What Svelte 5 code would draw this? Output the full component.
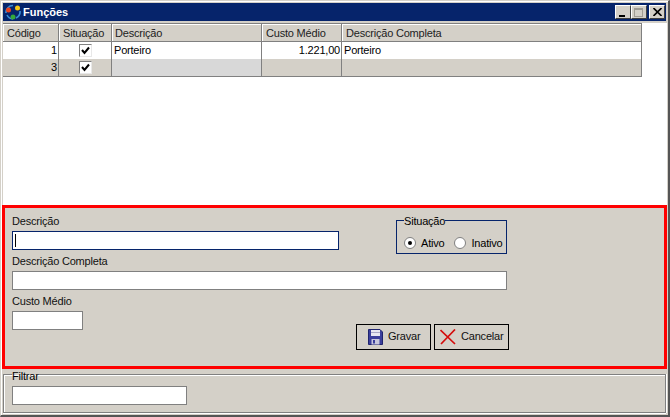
<script>
  let cols = ['Código', 'Situação', 'Descrição', 'Custo Médio', 'Descrição Completa'];
  let rows = [
    { id: 1, desc: 'Porteiro', custo: '1.221,00', full: 'Porteiro', sel: false },
    { id: 3, desc: '', custo: '', full: '', sel: true }
  ];
</script>

<div class="window">
  <!-- Title bar -->
  <header class="titlebar">
    <svg class="logo" width="16" height="16" viewBox="0 0 16 16">
      <path d="M1 9 A7 7 0 0 1 8 1.5" fill="none" stroke="#3a8fd8" stroke-width="1.6"/>
      <path d="M2 11 A7 7 0 0 0 8 15" fill="none" stroke="#3a8fd8" stroke-width="1.6"/>
      <path d="M15 7 A7 7 0 0 1 11 14" fill="none" stroke="#3a8fd8" stroke-width="1.6"/>
      <circle cx="3.5" cy="6" r="2.5" fill="#e8401c"/>
      <circle cx="12.5" cy="4" r="2.5" fill="#f6c716"/>
      <circle cx="8" cy="13" r="2.5" fill="#35a83a"/>
    </svg>
    <span class="title">Funções</span>
    <div class="winbtns">
      <button class="wb"><i class="min"></i></button>
      <button class="wb"><i class="max"></i></button>
      <button class="wb close">
        <svg width="9" height="8" viewBox="0 0 9 8"><path d="M0.5 0 L8.5 8 M8.5 0 L0.5 8" stroke="#000" stroke-width="1.6"/></svg>
      </button>
    </div>
  </header>

  <!-- Grid -->
  <section class="gridarea">
    <div class="grid">
      {#each cols as c}
        <div class="th">{c}</div>
      {/each}
      {#each rows as r}
        <div class="td num" class:sel={r.sel}>{r.id}</div>
        <div class="td check" class:sel={r.sel}>
          <span class="cb">
            <svg width="9" height="9" viewBox="0 0 9 9"><path d="M1 4 L3.5 7 L8 1.5" fill="none" stroke="#000" stroke-width="2"/></svg>
          </span>
        </div>
        <div class="td" class:selfocus={r.sel}>{r.desc}</div>
        <div class="td num" class:sel={r.sel}>{r.custo}</div>
        <div class="td" class:sel={r.sel}>{r.full}</div>
      {/each}
    </div>
  </section>

  <!-- Edit form -->
  <section class="form">
    <div class="toprow">
      <div class="field">
        <span class="lbl">Descrição</span>
        <div class="input focused w-desc"><span class="caret"></span></div>
      </div>
      <fieldset class="situacao">
        <legend>Situação</legend>
        <span class="radio on"></span><span class="rlabel">Ativo</span>
        <span class="radio"></span><span class="rlabel last">Inativo</span>
      </fieldset>
    </div>
    <div class="field">
      <span class="lbl">Descrição Completa</span>
      <div class="input w-full"></div>
    </div>
    <div class="bottomrow">
      <div class="field">
        <span class="lbl">Custo Médio</span>
        <div class="input w-custo"></div>
      </div>
      <div class="buttons">
        <button class="btn gravar">
          <svg width="15" height="16" viewBox="0 0 15 16">
            <path d="M0.5 0.5 H12 L14.5 3 V15.5 H0.5 Z" fill="#3b3f9c" stroke="#20246e"/>
            <rect x="3" y="1" width="9" height="6" fill="#e8e8f2"/>
            <rect x="3" y="3" width="9" height="1" fill="#a8a8c8"/>
            <rect x="3.5" y="10" width="8" height="5.5" fill="#c8c8dc"/>
            <rect x="5" y="11" width="2" height="3.5" fill="#3b3f9c"/>
          </svg>
          <span>Gravar</span>
        </button>
        <button class="btn cancelar">
          <svg width="16" height="16" viewBox="0 0 16 16">
            <path d="M0.5 1 L15 15 M15 0.5 L1 15" fill="none" stroke="#d40c0c" stroke-width="1.7"/>
          </svg>
          <span>Cancelar</span>
        </button>
      </div>
    </div>
  </section>

  <!-- Filter -->
  <fieldset class="filtro">
    <legend>Filtrar</legend>
    <div class="input w-filtro"></div>
  </fieldset>
</div>

<style>
  :global(body) {
    margin: 0;
    background: #d4d0c8;
  }

  * {
    box-sizing: border-box;
  }

  .window {
    width: 670px;
    height: 417px;
    display: flex;
    flex-direction: column;
    font-family: Tahoma, "Liberation Sans", sans-serif;
    font-size: 11px;
    letter-spacing: -0.2px;
    color: #000;
    background: #d4d0c8;
    border-style: solid;
    border-width: 1px 2px 2px 1px;
    border-color: #d4d0c8 #555 #555 #d4d0c8;
    box-shadow: inset 1px 1px 0 #fff;
    padding: 2px 1px 0 1px;
    overflow: hidden;
  }

  .titlebar {
    height: 18px;
    flex: none;
    display: flex;
    align-items: center;
    background: #06246b;
    padding: 0 1px 0 2px;
    margin: 0 1px 0 1px;
  }

  .logo {
    margin-right: 2px;
  }

  .title {
    color: #fff;
    font-weight: bold;
    font-size: 11px;
    letter-spacing: 0;
  }

  .winbtns {
    margin-left: auto;
    display: flex;
  }

  .wb {
    width: 16px;
    height: 14px;
    padding: 0;
    background: #d4d0c8;
    border-style: solid;
    border-width: 1px;
    border-color: #fff #404040 #404040 #fff;
  }

  .wb.close {
    margin-left: 2px;
    display: flex;
    align-items: center;
    justify-content: center;
  }

  .min {
    display: block;
    width: 6px;
    height: 2px;
    background: #000;
    margin: 8px 0 0 3px;
  }

  .max {
    display: block;
    width: 9px;
    height: 9px;
    border: 1px solid #a09c94;
    border-top-width: 2px;
    margin: 1px 0 0 2px;
  }

  .gridarea {
    background: #fff;
    height: 182px;
    flex: none;
    margin: 2px 0 0 1px;
  }

  .grid {
    display: grid;
    grid-template-columns: 56px 53px 150px 80px 300px;
    grid-template-rows: 19px 17px 17px;
    width: 639px;
    border-bottom: 1px solid #808080;
    box-shadow: inset 1px 0 0 #808080;
  }

  .th {
    background: #d4d0c8;
    border-right: 1px solid #808080;
    border-bottom: 1px solid #808080;
    border-top: 1px solid #808080;
    box-shadow: inset 1px 1px 0 #fff;
    padding: 3px 0 0 4px;
    white-space: nowrap;
    color: #222;
  }

  .th:nth-child(3) {
    padding-left: 3px;
  }

  .td {
    border-right: 1px solid #808080;
    padding: 2px 1px 0 2px;
    white-space: nowrap;
    background: #fff;
  }

  .num {
    text-align: right;
  }

  .sel {
    background: #d4d0c8;
  }

  .selfocus {
    background: #d8d8d8;
  }

  .check {
    display: flex;
    justify-content: center;
    align-items: center;
    padding: 0;
  }

  .cb {
    width: 13px;
    height: 13px;
    background: #fff;
    border: 1px solid;
    border-color: #808080 #e8e8e8 #e8e8e8 #808080;
    display: flex;
    align-items: center;
    justify-content: center;
  }

  .form {
    height: 164px;
    flex: none;
    border: 3px solid #f00;
    padding: 5px 0 0 7px;
  }

  .toprow {
    display: flex;
    align-items: flex-start;
    height: 40px;
  }

  .field {
    display: flex;
    flex-direction: column;
  }

  .lbl {
    height: 18px;
    line-height: 16px;
    color: #111;
  }

  .input {
    height: 19px;
    background: #fff;
    border: 1px solid #808080;
    display: flex;
    align-items: center;
  }

  .w-desc {
    width: 327px;
  }

  .w-full {
    width: 495px;
  }

  .w-custo {
    width: 71px;
  }

  .w-filtro {
    width: 175px;
  }

  .input.focused {
    border-color: #06246b;
    padding-left: 2px;
  }

  .caret {
    width: 1px;
    height: 13px;
    background: #000;
  }

  .situacao {
    margin: 2px 0 0 57px;
    padding: 6px 0 0 7px;
    width: 111px;
    min-width: 0;
    height: 39px;
    border: 1px solid #06246b;
    display: flex;
    align-items: center;
  }

  .situacao legend,
  .filtro legend {
    padding: 0;
    height: 11px;
    font-size: 11px;
  }

  .situacao legend {
    line-height: 12px;
  }

  .filtro legend {
    line-height: 14px;
  }

  .radio {
    width: 12px;
    height: 12px;
    flex: none;
    border-radius: 50%;
    background: #fff;
    border: 1px solid #808080;
    position: relative;
  }

  .radio.on::after {
    content: '';
    position: absolute;
    left: 3px;
    top: 3px;
    width: 4px;
    height: 4px;
    border-radius: 50%;
    background: #000;
  }

  .rlabel {
    margin: 0 10px 0 5px;
  }

  .rlabel.last {
    margin-right: 0;
  }

  .bottomrow {
    margin-top: 3px;
    display: flex;
    align-items: flex-start;
  }

  .buttons {
    display: flex;
    gap: 3px;
    margin: 31px 0 0 273px;
  }

  .btn {
    height: 26px;
    background: #d4d0c8;
    border: 1px solid #000;
    font: inherit;
    letter-spacing: inherit;
    display: flex;
    align-items: center;
    padding: 0;
    color: #111;
  }

  .btn span {
    margin-bottom: 2px;
  }

  .gravar {
    width: 75px;
    padding-left: 11px;
    gap: 5px;
  }

  .cancelar {
    width: 75px;
    padding-left: 5px;
    gap: 5px;
  }

  .filtro {
    margin: 0 0 0 1px;
    padding: 6px 0 0 8px;
    width: 663px;
    height: 44px;
    border: 1px solid #808080;
    box-shadow: inset 1px 1px 0 #fff, 0 1px 0 #fff, 1px 0 0 #fff;
  }
</style>
